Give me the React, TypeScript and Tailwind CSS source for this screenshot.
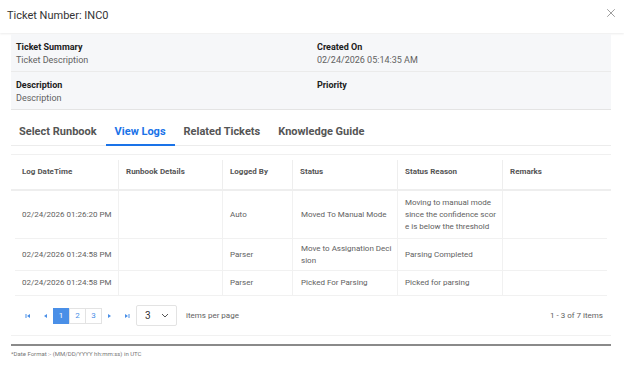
import { X } from "lucide-react";

const logs = [
  {
    time: "02/24/2026 01:26:20 PM",
    by: "Auto",
    status: "Moved To Manual Mode",
    reason: "Moving to manual mode since the confidence score is below the threshold",
    h: "h-[48px]",
  },
  {
    time: "02/24/2026 01:24:58 PM",
    by: "Parser",
    status: "Move to Assignation Decision",
    reason: "Parsing Completed",
    h: "h-[32px]",
  },
  {
    time: "02/24/2026 01:24:58 PM",
    by: "Parser",
    status: "Picked For Parsing",
    reason: "Picked for parsing",
    h: "h-[25px]",
  },
];

const cols = [
  { label: "Log DateTime", w: "w-[108px] pl-[11px]" },
  { label: "Runbook Details", w: "w-[104px] pl-[7px]" },
  { label: "Logged By", w: "w-[70px] pl-[7px]" },
  { label: "Status", w: "w-[105px] pl-[7px]" },
  { label: "Status Reason", w: "w-[105px] pl-[7px]" },
  { label: "Remarks", w: "flex-1 pl-[7px]" },
];

const tabs = ["Select Runbook", "View Logs", "Related Tickets", "Knowledge Guide"];

const Tri = ({ dir, bar }: { dir: "l" | "r"; bar?: boolean }) => (
  <svg width="6" height="6" viewBox="0 0 6 6" className="text-[#4a8fe7]">
    {dir === "l" ? (
      <>
        {bar && <rect x="0.5" y="1" width="1" height="4" fill="currentColor" />}
        <polygon points="5,1 5,5 2,3" fill="currentColor" />
      </>
    ) : (
      <>
        <polygon points="1,1 1,5 4,3" fill="currentColor" />
        {bar && <rect x="4.5" y="1" width="1" height="4" fill="currentColor" />}
      </>
    )}
  </svg>
);

export default function App() {
  return (
    <div className="w-[624px] h-[380px] bg-white text-[#424242] font-['Roboto',sans-serif] overflow-hidden">
      {/* header */}
      <div className="h-[33px] flex items-center justify-between pl-[7px] pr-[6px] shadow-[0_1px_2px_rgba(0,0,0,0.08)]">
        <span className="text-[11px] text-[#333]">Ticket Number: INC0</span>
        <X className="w-[14px] h-[14px] text-[#888] -mt-[7px]" strokeWidth={1.4} />
      </div>

      <div className="px-[11px] pr-[13px]">
        {/* info panel */}
        <div className="mt-[1px] bg-[#f6f7f9] border-b border-[#e4e4e4] text-[9px]">
          <div className="h-[38px] grid grid-cols-2 border-b border-[#ebebeb] pt-[7px]">
            <div className="pl-[5px]">
              <div className="font-bold text-[#212121] leading-[12px]">Ticket Summary</div>
              <div className="text-[#616161] leading-[14px]">Ticket Description</div>
            </div>
            <div className="pl-[6px]">
              <div className="font-bold text-[#212121] leading-[12px]">Created On</div>
              <div className="text-[#616161] leading-[14px]">02/24/2026 05:14:35 AM</div>
            </div>
          </div>
          <div className="h-[37px] grid grid-cols-2 pt-[7px]">
            <div className="pl-[5px]">
              <div className="font-bold text-[#212121] leading-[12px]">Description</div>
              <div className="text-[#616161] leading-[14px]">Description</div>
            </div>
            <div className="pl-[6px]">
              <div className="font-bold text-[#212121] leading-[12px]">Priority</div>
            </div>
          </div>
        </div>

        {/* tabs */}
        <div className="mt-[8px] h-[28px] flex items-stretch border-b border-[#ececec] pl-[8px] text-[11px] font-bold">
          {tabs.map((t) => (
            <div
              key={t}
              className={`flex items-center px-[9px] pt-[2px] first:pl-0 ${
                t === "View Logs"
                  ? "text-[#1a73e8] border-b-2 border-[#1a73e8] -mb-px"
                  : "text-[#555]"
              }`}
            >
              {t}
            </div>
          ))}
        </div>

        {/* table */}
        <div className="mt-[8px] border-t border-[#f0f0f0] text-[8px]">
          <div className="h-[36px] flex border-b-2 border-[#eeeeee] font-bold text-[#555]">
            {cols.map((c, i) => (
              <div
                key={c.label}
                className={`${c.w} flex items-center mt-[5px] pb-[5px] ${i < cols.length - 1 ? "border-r border-[#eeeeee]" : ""}`}
              >
                {c.label}
              </div>
            ))}
          </div>
          {logs.map((r, ri) => (
            <div key={ri} className={`${r.h} flex border-b border-[#f1f1f1] mx-[4px] text-[#616161]`}>
              <div className="w-[104px] flex items-center pl-[7px] border-r border-[#f1f1f1]">{r.time}</div>
              <div className="w-[104px] border-r border-[#f1f1f1]" />
              <div className="w-[70px] flex items-center pl-[7px] border-r border-[#f1f1f1]">{r.by}</div>
              <div className="w-[105px] flex items-center pl-[8px] pr-[5px] border-r border-[#f1f1f1] break-all leading-[12px]">
                {r.status}
              </div>
              <div className="w-[105px] flex items-center pl-[7px] pr-[5px] border-r border-[#f1f1f1] break-all leading-[12px]">
                {r.reason}
              </div>
              <div className="flex-1" />
            </div>
          ))}

          {/* pager */}
          <div className="h-[40px] flex items-center border-b border-[#f1f1f1] pl-[8px] pr-[8px]">
            <div className="flex items-center">
              <span className="w-[17px] flex justify-center"><Tri dir="l" bar /></span>
              <span className="w-[17px] flex justify-center"><Tri dir="l" /></span>
              <span className="w-[16px] h-[16px] flex items-center justify-center bg-[#4a8fe7] text-white">1</span>
              <span className="w-[17px] h-[16px] flex items-center justify-center border border-[#e3e3e3] text-[#4a8fe7]">2</span>
              <span className="w-[16px] h-[16px] flex items-center justify-center border border-l-0 border-[#e3e3e3] text-[#4a8fe7]">3</span>
              <span className="w-[16px] flex justify-center"><Tri dir="r" /></span>
              <span className="w-[17px] flex justify-center"><Tri dir="r" bar /></span>
            </div>
            <div className="ml-[1px] w-[41px] h-[21px] flex items-center justify-between pl-[8px] pr-[7px] border border-[#e3e3e3] rounded-[2px] text-[10px] text-[#333]">
              3
              <svg width="8" height="5" viewBox="0 0 8 5"><path d="M1 1l3 3 3-3" stroke="#555" strokeWidth="1" fill="none" /></svg>
            </div>
            <span className="ml-[9px] text-[#616161]">items per page</span>
            <span className="ml-auto text-[#616161]">1 - 3 of 7 items</span>
          </div>
        </div>

        <div className="mt-[8px] h-[2px] bg-[#8a8a8a]" />
        <div className="mt-[3px] text-[6px] text-[#777]">*Date Format :- (MM/DD/YYYY hh:mm:ss) in UTC</div>
      </div>
    </div>
  );
}
